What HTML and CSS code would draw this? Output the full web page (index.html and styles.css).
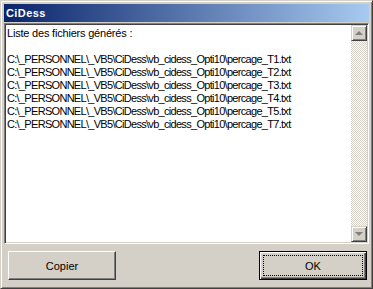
FILE: index.html
```html
<!DOCTYPE html>
<html lang="fr">
<head>
    <meta charset="UTF-8">
    <meta name="viewport" content="width=device-width, initial-scale=1.0">
    <title>CiDess</title>
    <link rel="stylesheet" href="styles.css">
</head>
<body>
    <div class="window">
        <div class="titlebar"><span class="title">CiDess</span></div>
        <div class="textbox">
            <div class="text">
                <p class="intro">Liste des fichiers générés :</p>
                <p>&nbsp;</p>
                <p>C:\_PERSONNEL\_VB5\CiDess\vb_cidess_Opti10\percage_T1.txt</p>
                <p>C:\_PERSONNEL\_VB5\CiDess\vb_cidess_Opti10\percage_T2.txt</p>
                <p>C:\_PERSONNEL\_VB5\CiDess\vb_cidess_Opti10\percage_T3.txt</p>
                <p>C:\_PERSONNEL\_VB5\CiDess\vb_cidess_Opti10\percage_T4.txt</p>
                <p>C:\_PERSONNEL\_VB5\CiDess\vb_cidess_Opti10\percage_T5.txt</p>
                <p>C:\_PERSONNEL\_VB5\CiDess\vb_cidess_Opti10\percage_T7.txt</p>
            </div>
            <div class="scrollbar">
                <div class="sb-btn up"><span class="arrow"></span></div>
                <div class="track"></div>
                <div class="sb-btn down"><span class="arrow"></span></div>
            </div>
        </div>
        <div class="buttons">
            <button class="btn">Copier</button>
            <button class="btn default"><span class="focus">OK</span></button>
        </div>
    </div>
</body>
</html>
```

FILE: styles.css
```css
*{margin:0;padding:0;box-sizing:border-box;}
body{
    background: #d4d0c8;
    font-family: "Liberation Sans", Arial, sans-serif;
    font-size: 11px;
}
.window{
    width: 373px;
    height: 289px;
    padding: 3px;
    background: #d4d0c8;
    border: 1px solid;
    border-color: #d4d0c8 #404040 #404040 #d4d0c8;
    box-shadow: inset 1px 1px #fff, inset -1px -1px #808080;
    display: flex;
    flex-direction: column;
}
.titlebar{
    height: 18px;
    background: linear-gradient(to right, #0a246a, #a6caf0);
    display: flex;
    align-items: center;
    padding-left: 2px;
}
.title{
    color: #fff;
    font-weight: bold;
    font-size: 11px;
    letter-spacing: 0.4px;
}
.textbox{
    margin-top: 1px;
    height: 221px;
    display: flex;
    background: #fff;
    border: 1px solid;
    border-color: #808080 #fff #fff #808080;
    box-shadow: inset 1px 1px #404040, inset -1px -1px #d4d0c8;
    padding: 1px;
}
.text{
    flex: 1;
    padding: 2px 0 0 1px;
    line-height: 13px;
    letter-spacing: -0.7px;
    color: #000;
    white-space: nowrap;
    overflow: hidden;
}
.intro{letter-spacing: -0.2px;}
.scrollbar{
    width: 16px;
    display: flex;
    flex-direction: column;
}
.track{
    flex: 1;
    background: repeating-conic-gradient(#fff 0 25%, #d4d0c8 0 50%) 0 0/2px 2px;
}
.sb-btn{
    height: 16px;
    background: #d4d0c8;
    border: 1px solid;
    border-color: #d4d0c8 #404040 #404040 #d4d0c8;
    box-shadow: inset 1px 1px #fff, inset -1px -1px #808080;
    display: flex;
    align-items: center;
    justify-content: center;
}
.arrow{
    width: 0;
    height: 0;
    border-left: 4px solid transparent;
    border-right: 4px solid transparent;
}
.up .arrow{border-bottom: 4px solid #808080;}
.down .arrow{border-top: 4px solid #808080;}
.buttons{
    display: flex;
    justify-content: space-between;
    padding: 7px 2px 0 4px;
}
.btn{
    width: 108px;
    height: 29px;
    font-family: "Liberation Sans", Arial, sans-serif;
    font-size: 11px;
    color: #000;
    background: #d4d0c8;
    border: 1px solid;
    border-color: #fff #404040 #404040 #fff;
    box-shadow: inset -1px -1px #808080;
}
.default{
    border: 1px solid #000;
    box-shadow: inset 1px 1px #fff, inset -1px -1px #404040, inset -2px -2px #808080;
    padding: 3px;
}
.focus{
    display: flex;
    align-items: center;
    justify-content: center;
    height: 100%;
    border: 1px dotted #000;
}
```
